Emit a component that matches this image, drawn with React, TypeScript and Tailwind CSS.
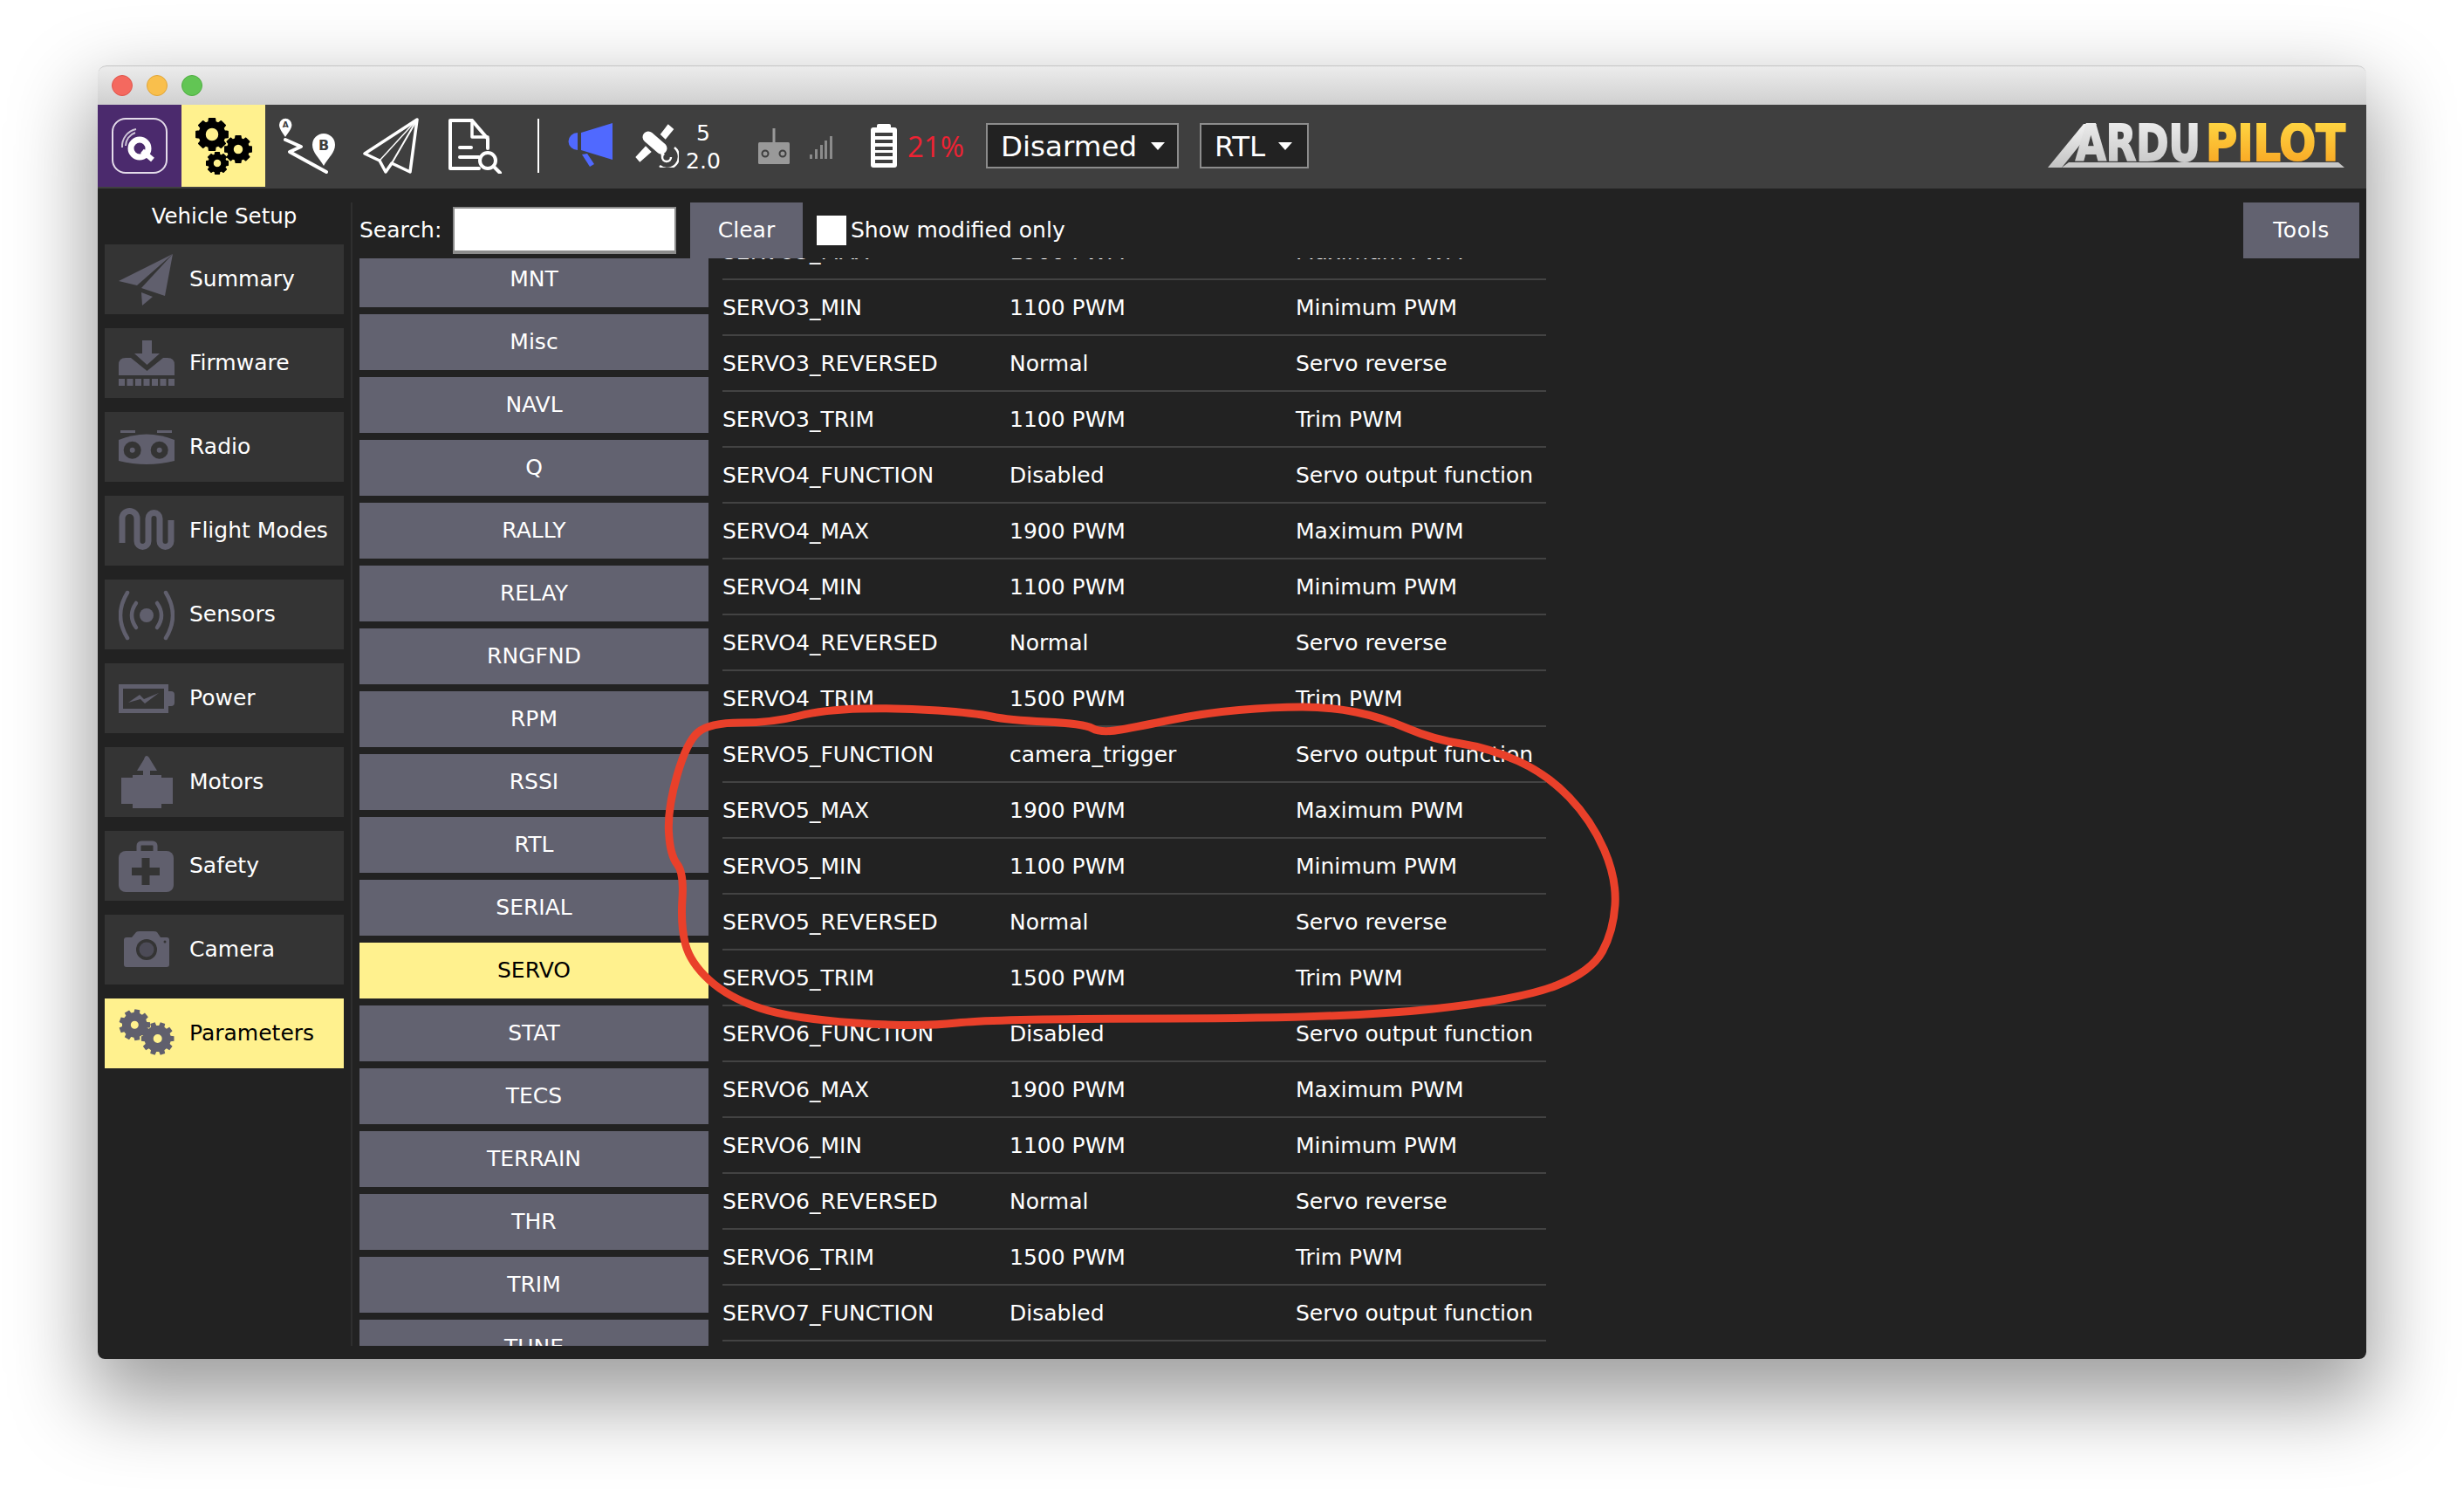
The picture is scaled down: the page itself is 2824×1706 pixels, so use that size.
// App.tsx
const FONT = "font-['DejaVu_Sans',sans-serif]";

const groups = [
    "MNT", "Misc", "NAVL", "Q", "RALLY", "RELAY", "RNGFND", "RPM", "RSSI", "RTL",
    "SERIAL", "SERVO", "STAT", "TECS", "TERRAIN", "THR", "TRIM", "TUNE",
];

const rows: [string, string, string][] = [
    ["SERVO3_MAX", "1900 PWM", "Maximum PWM"],
    ["SERVO3_MIN", "1100 PWM", "Minimum PWM"],
    ["SERVO3_REVERSED", "Normal", "Servo reverse"],
    ["SERVO3_TRIM", "1100 PWM", "Trim PWM"],
    ["SERVO4_FUNCTION", "Disabled", "Servo output function"],
    ["SERVO4_MAX", "1900 PWM", "Maximum PWM"],
    ["SERVO4_MIN", "1100 PWM", "Minimum PWM"],
    ["SERVO4_REVERSED", "Normal", "Servo reverse"],
    ["SERVO4_TRIM", "1500 PWM", "Trim PWM"],
    ["SERVO5_FUNCTION", "camera_trigger", "Servo output function"],
    ["SERVO5_MAX", "1900 PWM", "Maximum PWM"],
    ["SERVO5_MIN", "1100 PWM", "Minimum PWM"],
    ["SERVO5_REVERSED", "Normal", "Servo reverse"],
    ["SERVO5_TRIM", "1500 PWM", "Trim PWM"],
    ["SERVO6_FUNCTION", "Disabled", "Servo output function"],
    ["SERVO6_MAX", "1900 PWM", "Maximum PWM"],
    ["SERVO6_MIN", "1100 PWM", "Minimum PWM"],
    ["SERVO6_REVERSED", "Normal", "Servo reverse"],
    ["SERVO6_TRIM", "1500 PWM", "Trim PWM"],
    ["SERVO7_FUNCTION", "Disabled", "Servo output function"],
];

const gearPath = (cx: number, cy: number, r: number, hole: number, teeth = 8) => {
    const pts: string[] = [];
    const step = (Math.PI * 2) / teeth;
    const inner = r * 0.8;
    for (let i = 0; i < teeth; i++) {
        const a = i * step;
        const list: [number, number][] = [
            [inner, a - step * 0.34],
            [r, a - step * 0.24],
            [r, a + step * 0.24],
            [inner, a + step * 0.34],
        ];
        list.forEach(([rad, ang]) => {
            pts.push(`${(cx + rad * Math.cos(ang)).toFixed(2)} ${(cy + rad * Math.sin(ang)).toFixed(2)}`);
        });
    }
    return `M${pts.join(" L")} Z M${cx - hole} ${cy} a${hole} ${hole} 0 1 0 ${hole * 2} 0 a${hole} ${hole} 0 1 0 ${-hole * 2} 0 Z`;
};

const ICON = "#605f6d";

const SummaryIcon = () => (
    <svg width="64" height="64" viewBox="0 0 64 64" fill={ICON}>
        <path d="M62 3 L0 34 L21 39 Z" />
        <path d="M62 3 L26 42 L53 51 Z" />
        <path d="M26 47 L39 52 L27 62 Z" />
    </svg>
);

const FirmwareIcon = () => (
    <svg width="64" height="64" viewBox="0 0 64 64" fill={ICON}>
        <path d="M27 6 H38 V21 H47 L32.5 34 L18 21 H27 Z" />
        <path d="M0 46 V34 Q0 26 8 26 H14 L32.5 41 L51 26 H56 Q64 26 64 34 V46 Z" />
        {[0, 9.5, 19, 28.5, 38, 47.5, 57].map((x) => (
            <rect key={x} x={x} y="50" width="7" height="8" />
        ))}
    </svg>
);

const RadioIcon = () => (
    <svg width="64" height="64" viewBox="0 0 64 64" fill={ICON}>
        <rect x="2" y="13" width="17" height="3" />
        <rect x="44" y="13" width="17" height="3" />
        <path d="M0 24 Q32 11 64 24 V48 Q32 56 0 48 Z" />
        <circle cx="15.7" cy="35.7" r="10" fill="#343434" />
        <circle cx="15.7" cy="35.7" r="3" />
        <circle cx="46.7" cy="35.7" r="10" fill="#343434" />
        <circle cx="46.7" cy="35.7" r="3" />
    </svg>
);

const ModesIcon = () => (
    <svg width="64" height="64" viewBox="0 0 64 64" fill="none" stroke={ICON} strokeWidth="7">
        <path d="M4 46 V18 A8.5 8.5 0 0 1 21 18 V44 A6.5 6.5 0 0 0 34 44 V18 A6.5 6.5 0 0 1 47 18 V44 A6.5 6.5 0 0 0 60 44 V20" />
    </svg>
);

const SensorsIcon = () => (
    <svg width="64" height="64" viewBox="0 0 64 64" fill="none" stroke={ICON} strokeWidth="4.5" strokeLinecap="round">
        <circle cx="32" cy="33" r="8" fill={ICON} stroke="none" />
        <path d="M10 7 Q-6 33 10 59" />
        <path d="M54 7 Q70 33 54 59" />
        <path d="M20 19 Q10 33 20 47" />
        <path d="M44 19 Q54 33 44 47" />
    </svg>
);

const PowerIcon = () => (
    <svg width="64" height="64" viewBox="0 0 64 64" fill={ICON}>
        <rect x="2.5" y="18.5" width="52" height="28" fill="none" stroke={ICON} strokeWidth="5" />
        <path d="M57 24 H60 Q64 24 64 28 V37 Q64 41 60 41 H57 Z" />
        <path d="M11 37 L24 28 L29 33 L46 26 L30 38 L25 33 Z" />
    </svg>
);

const MotorsIcon = () => (
    <svg width="64" height="64" viewBox="0 0 64 64" fill={ICON}>
        <path d="M32 2 Q34 2 36 6 L44 19 H36 V24 H49 V27 H62 V57 H49 V62 H16 V57 H3 V27 H16 V24 H28 V19 H21 L29 6 Q30 2 32 2 Z" />
    </svg>
);

const SafetyIcon = () => (
    <svg width="64" height="64" viewBox="0 0 64 64" fill={ICON}>
        <rect x="23" y="6" width="19" height="14" rx="3" fill="none" stroke={ICON} strokeWidth="5" />
        <rect x="0" y="15" width="63" height="47" rx="8" />
        <rect x="15" y="34" width="32" height="9" fill="#343434" />
        <rect x="26.5" y="23" width="9" height="31" fill="#343434" />
    </svg>
);

const CameraIcon = () => (
    <svg width="64" height="64" viewBox="0 0 64 64" fill={ICON}>
        <path d="M6 21 Q6 18 9 18 H15 L20 12 Q21 11 24 11 H40 Q43 11 44 12 L48 18 H55 Q58 18 58 21 V49 Q58 52 55 52 H9 Q6 52 6 49 Z" />
        <circle cx="32" cy="32" r="12" fill="#343434" />
        <circle cx="32" cy="32" r="8.5" fill="#4c4b57" />
        <circle cx="53" cy="23" r="1.5" fill="#343434" />
    </svg>
);

const ParamsIcon = () => (
    <svg width="64" height="64" viewBox="0 0 64 64" fill={ICON} fillRule="evenodd">
        <path d={gearPath(18.3, 22.3, 18, 4.5, 9)} />
        <path d={gearPath(44.7, 38, 19, 5, 10)} />
    </svg>
);

const sidebar = [
    { label: "Summary", icon: <SummaryIcon /> },
    { label: "Firmware", icon: <FirmwareIcon /> },
    { label: "Radio", icon: <RadioIcon /> },
    { label: "Flight Modes", icon: <ModesIcon /> },
    { label: "Sensors", icon: <SensorsIcon /> },
    { label: "Power", icon: <PowerIcon /> },
    { label: "Motors", icon: <MotorsIcon /> },
    { label: "Safety", icon: <SafetyIcon /> },
    { label: "Camera", icon: <CameraIcon /> },
    { label: "Parameters", icon: <ParamsIcon />, active: true },
];

const QLogo = () => (
    <svg width="64" height="64" viewBox="0 0 64 64" fill="none" stroke="#fff">
        <rect x="1" y="1" width="62" height="62" rx="15" strokeWidth="2" stroke="#e4dcea" />
        <circle cx="32" cy="35" r="10" strokeWidth="7" />
        <path d="M35 38 L47 48" strokeWidth="6" />
        <path d="M12 34 A20 20 0 0 1 28 13" strokeWidth="2" stroke="#cfc6d8" />
        <path d="M16 32 A16 16 0 0 1 27 17" strokeWidth="2" stroke="#cfc6d8" />
    </svg>
);

const Gears = () => (
    <svg width="96" height="94" viewBox="0 0 96 94" fill="#000" stroke="#000" strokeWidth="1.5" strokeLinejoin="round" fillRule="evenodd">
        <path d={gearPath(35, 34, 18.5, 8)} />
        <path d={gearPath(65, 51, 15.5, 6)} />
        <path d={gearPath(41, 67, 12.5, 5)} />
    </svg>
);

const PlanIcon = () => (
    <svg width="64" height="64" viewBox="0 0 64 64" fill="#fff">
        <path d="M7 22 C4 17 0 13 0 8 A7.2 7.2 0 0 1 14.4 8 C14.4 13 10 17 7 22 Z" />
        <path d="M51 55 C46 46 38 40 38 31 A13 13 0 0 1 64 31 C64 40 56 46 51 55 Z" />
        <text x="7.2" y="11" textAnchor="middle" fontSize="9" fontWeight="700" fill="#3f3f3f" fontFamily="DejaVu Sans">A</text>
        <text x="51" y="37" textAnchor="middle" fontSize="16" fontWeight="700" fill="#3f3f3f" fontFamily="DejaVu Sans">B</text>
        <path d="M7 25 L25 33 L12 39 L54 62" fill="none" stroke="#fff" strokeWidth="4" strokeLinecap="round" strokeLinejoin="round" />
    </svg>
);

const PlaneIcon = () => (
    <svg width="64" height="64" viewBox="0 0 64 64" fill="none" stroke="#fff" strokeLinejoin="round">
        <path d="M62 2 L2 41 L19 49 L26 62 L33 52 L54 62 Z" strokeWidth="3.5" />
        <path d="M62 2 L19 49" strokeWidth="1.5" />
        <path d="M62 2 L33 52" strokeWidth="2" />
    </svg>
);

const DocIcon = () => (
    <svg width="64" height="64" viewBox="0 0 64 64" fill="none" stroke="#fff" strokeWidth="4" strokeLinecap="round" strokeLinejoin="round">
        <path d="M46 35 V24 L28 3 H3 V58 H36" />
        <path d="M28 3 V22 H46" strokeWidth="3.5" />
        <path d="M14 34 H27" />
        <path d="M14 45 H36" />
        <circle cx="46" cy="49" r="9" />
        <path d="M53 56 L60 63" />
    </svg>
);

const Megaphone = () => (
    <svg width="52" height="53" viewBox="0 0 52 53" fill="#5069ff">
        <path d="M16 11 L52 0 V42 L16 31 Z" />
        <path d="M12 11 A10.5 10 0 0 0 12 31 Z" />
        <path d="M17 36 L23 35 L31 47 L26 50 Z" />
    </svg>
);

const Satellite = () => (
    <svg width="50" height="50" viewBox="0 0 50 50" fill="#fff">
        <path d="M28.7 12 L37.7 0.3 L44.3 6 L34.7 17.7 Z" />
        <path d="M0.3 38 L12 25.3 L18.7 32 L5.3 43.7 Z" />
        <path d="M15 15 L30 28" stroke="#fff" strokeWidth="13" strokeLinecap="round" />
        <path d="M27 21 L36 28 L30 38 Z" />
        <circle cx="36" cy="38" r="5" fill="none" stroke="#fff" strokeWidth="2.5" strokeDasharray="20 12" />
        <path d="M45 27 A13 13 0 0 1 28 48" fill="none" stroke="#fff" strokeWidth="2.5" />
    </svg>
);

const RcIcon = () => (
    <svg width="36" height="41" viewBox="0 0 36 41" fill="#999">
        <rect x="16.5" y="0" width="3" height="17" />
        <rect x="0" y="16" width="36" height="25" rx="1.5" />
        <circle cx="8" cy="29" r="3.5" fill="none" stroke="#3f3f3f" strokeWidth="2" />
        <circle cx="28" cy="29" r="3.5" fill="none" stroke="#3f3f3f" strokeWidth="2" />
    </svg>
);

const SignalIcon = () => (
    <svg width="26" height="26" viewBox="0 0 26 26" fill="#8b8b8b">
        <rect x="0" y="21" width="3" height="5" />
        <rect x="6" y="15" width="3" height="11" />
        <rect x="12" y="10" width="3" height="16" />
        <rect x="17" y="5" width="3" height="21" />
        <rect x="23" y="0" width="3" height="26" />
    </svg>
);

const BatteryIcon = () => (
    <svg width="30" height="50" viewBox="0 0 30 50" fill="#fff">
        <rect x="7" y="0" width="16" height="8" rx="2" />
        <rect x="0" y="4" width="30" height="46" rx="3" />
        {[10, 18, 26, 33, 41].map((y) => (
            <rect key={y} x="5" y={y} width="20" height="4" fill="#3f3f3f" />
        ))}
    </svg>
);

const Logo = () => (
    <svg width="343" height="52" viewBox="0 0 343 52">
        <defs>
            <linearGradient id="logoGray" x1="0" y1="0" x2="0" y2="1">
                <stop offset="0" stopColor="#f2f2f2" />
                <stop offset="1" stopColor="#c2c2c2" />
            </linearGradient>
            <linearGradient id="logoGold" x1="0" y1="0" x2="0" y2="1">
                <stop offset="0" stopColor="#ffdd47" />
                <stop offset="1" stopColor="#f8a01f" />
            </linearGradient>
        </defs>
        <path d="M0 51 L41 1 H56 L16 51 Z" fill="url(#logoGray)" />
        <path d="M16 51 L24 45 H333 L340 51 Z" fill="#c8c8c8" />
        <text x="32" y="43" fontFamily="DejaVu Sans" fontWeight="700" fontSize="57" textLength="143" lengthAdjust="spacingAndGlyphs" fill="url(#logoGray)" stroke="url(#logoGray)" strokeWidth="2">ARDU</text>
        <text x="181" y="43" fontFamily="DejaVu Sans" fontWeight="700" fontSize="57" textLength="160" lengthAdjust="spacingAndGlyphs" fill="url(#logoGold)" stroke="url(#logoGold)" strokeWidth="2">PILOT</text>
    </svg>
);

const points: [number, number][] = [
    [813, 828], [885, 828], [944, 813], [1031, 811], [1118, 817], [1155, 825], [1242, 829], [1262, 840],
    [1307, 832], [1380, 817], [1460, 810], [1525, 810], [1584, 822], [1642, 847], [1707, 857], [1773, 887],
    [1824, 940], [1853, 1007], [1849, 1067], [1824, 1113], [1744, 1145], [1540, 1167], [1140, 1167], [1053, 1177],
    [907, 1167], [835, 1143], [791, 1103], [780, 1060], [784, 1000], [768, 980], [765, 927], [787, 850],
];

const circlePath = () => {
    let d = `M${(points[0][0] + points[points.length - 1][0]) / 2} ${(points[0][1] + points[points.length - 1][1]) / 2}`;
    points.forEach((p, i) => {
        const n = points[(i + 1) % points.length];
        d += ` Q${p[0]} ${p[1]} ${(p[0] + n[0]) / 2} ${(p[1] + n[1]) / 2}`;
    });
    return d;
};

const Dropdown = ({ label, className }: { label: string; className: string }) => (
    <div className={`h-[52px] bg-[#222222] border-2 border-[#8c8c8c] flex items-center text-[32.5px] leading-none text-white ${className}`}>
        <span className="mt-[3px]">{label}</span>
        <span className="w-0 h-0 border-x-[8px] border-x-transparent border-t-[9px] border-t-white" />
    </div>
);

const App = () => {
    return (
        <div className={`h-[1706px] bg-white pt-[75px] px-[112px] overflow-hidden ${FONT}`}>
            <div className="relative w-[2600px] h-[1482px] flex flex-col rounded-t-[10px] rounded-b-[8px] shadow-[0_40px_90px_10px_rgba(0,0,0,0.38)]">
                {/* title bar */}
                <div className="h-[45px] shrink-0 rounded-t-[10px] bg-gradient-to-b from-[#ececec] to-[#d0d0d0] border-t border-[#c4c4c4] flex items-center gap-4 pl-4">
                    <span className="w-6 h-6 rounded-full bg-[#f4695f] border border-[#e0554b]" />
                    <span className="w-6 h-6 rounded-full bg-[#f9bf4c] border border-[#e0a63a]" />
                    <span className="w-6 h-6 rounded-full bg-[#62c554] border border-[#4fae42]" />
                </div>

                {/* toolbar */}
                <div className="h-[96px] shrink-0 bg-[#3f3f3f] flex items-start relative">
                    <div className="w-[96px] h-[94px] bg-[#4b2a6d] flex items-center justify-center">
                        <QLogo />
                    </div>
                    <div className="w-[96px] h-[94px] bg-[#fff18e]">
                        <Gears />
                    </div>
                    <div className="h-[94px] flex items-center">
                        <div className="ml-4"><PlanIcon /></div>
                        <div className="ml-8"><PlaneIcon /></div>
                        <div className="ml-[33px]"><DocIcon /></div>
                        <div className="ml-[39px] w-[2px] h-[62px] bg-white" />
                        <div className="ml-[32px]"><Megaphone /></div>
                        <div className="ml-[26px]"><Satellite /></div>
                        <div className="ml-2 mt-[3px] w-[40px] flex flex-col items-center text-white text-[25px] leading-[32px]">
                            <span>5</span>
                            <span>2.0</span>
                        </div>
                        <div className="ml-[43px]"><RcIcon /></div>
                        <div className="ml-[23px] mt-1"><SignalIcon /></div>
                        <div className="ml-[44px]"><BatteryIcon /></div>
                        <span className="ml-3 mt-[2px] text-[33px] font-['Open_Sans',sans-serif] text-[#ee2233]">21%</span>
                        <Dropdown label="Disarmed" className="ml-[25px] w-[221px] pl-[15px] gap-[16px]" />
                        <Dropdown label="RTL" className="ml-[24px] w-[125px] pl-[15px] gap-[15px]" />
                    </div>
                    <div className="ml-auto mr-[22px] mt-[21px]">
                        <Logo />
                    </div>
                </div>

                {/* body */}
                <div className="flex-1 min-h-0 bg-[#222222] flex rounded-b-[8px] text-[25px] text-white">
                    <div className="w-[290px] shrink-0 px-2">
                        <div className="h-[64px] flex items-center justify-center text-[24.5px]">Vehicle Setup</div>
                        <div className="flex flex-col gap-4">
                            {sidebar.map((item) => (
                                <div
                                    key={item.label}
                                    className={`h-[80px] flex items-center gap-[17px] pl-4 ${item.active ? "bg-[#fff18e] text-black" : "bg-[#343434]"}`}
                                >
                                    {item.icon}
                                    <span>{item.label}</span>
                                </div>
                            ))}
                        </div>
                    </div>
                    <div className="w-[2px] mt-4 mb-[15px] bg-[#2f2f2f]" />
                    <div className="flex-1 min-w-0 flex flex-col pt-4 pb-[15px] pl-2 pr-2">
                        <div className="h-[64px] shrink-0 flex items-center">
                            <span className="w-[107px]">Search:</span>
                            <div className="w-[256px] h-[54px] bg-white border-2 border-b-4 border-[#8c8c8c]" />
                            <button className="ml-4 w-[129px] h-[64px] bg-[#626270] text-center">Clear</button>
                            <span className="ml-4 w-[34px] h-[34px] bg-white" />
                            <span className="ml-[5px]">Show modified only</span>
                            <button className="ml-auto w-[133px] h-[64px] bg-[#626270] text-center tracking-[0.6px]">Tools</button>
                        </div>
                        <div className="flex-1 min-h-0 flex overflow-hidden">
                            <div className="w-[400px] shrink-0 overflow-hidden">
                                <div className="flex flex-col gap-2 -mt-2">
                                    {groups.map((g) => (
                                        <div
                                            key={g}
                                            className={`h-[64px] shrink-0 flex items-center justify-center ${g === "SERVO" ? "bg-[#fff18e] text-black" : "bg-[#626270]"}`}
                                        >
                                            {g}
                                        </div>
                                    ))}
                                </div>
                            </div>
                            <div className="ml-4 w-[944px] shrink-0">
                                <div className="-mt-[39px]">
                                    {rows.map(([name, value, desc]) => (
                                        <div key={name} className="h-[64px] pt-[2px] flex items-center border-b-2 border-[#434343]">
                                            <span className="w-[329px]">{name}</span>
                                            <span className="w-[328px]">{value}</span>
                                            <span>{desc}</span>
                                        </div>
                                    ))}
                                </div>
                            </div>
                        </div>
                    </div>
                </div>

                {/* hand drawn circle on top of the screenshot */}
                <svg className="absolute inset-0 w-full h-full pointer-events-none" viewBox="112 75 2600 1482" fill="none">
                    <path d={circlePath()} stroke="#e9402a" strokeWidth="9" strokeLinejoin="round" />
                </svg>
            </div>
        </div>
    );
};

export default App;
